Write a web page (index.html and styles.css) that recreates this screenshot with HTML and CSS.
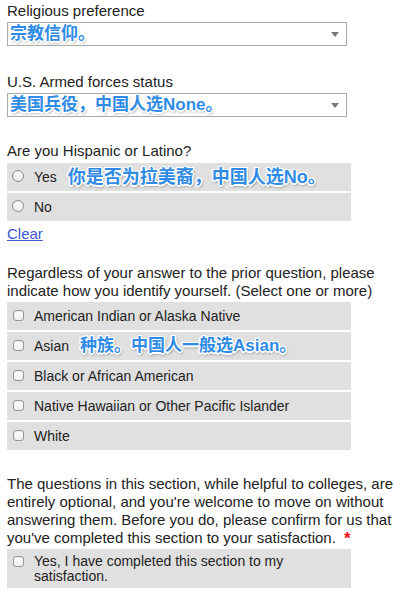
FILE: index.html
```html
<!DOCTYPE html>
<html lang="en">
<head>
<meta charset="utf-8">
<title>Demographics</title>
<link rel="stylesheet" href="styles.css">
</head>
<body>
<div class="form">
  <div class="field field-first">
    <div class="label">Religious preference</div>
    <div class="select">
      <span class="note note-lg">宗教信仰。</span>
      <span class="arrow"></span>
    </div>
  </div>

  <div class="field field-second">
    <div class="label">U.S. Armed forces status</div>
    <div class="select">
      <span class="note note-lg">美国兵役，中国人选None。</span>
      <span class="arrow"></span>
    </div>
  </div>

  <div class="field field-third">
    <div class="label label-rows">Are you Hispanic or Latino?</div>
    <div class="rows">
      <div class="row"><span class="radio"></span><span class="opt">Yes</span><span class="note note-md">你是否为拉美裔，中国人选No。</span></div>
      <div class="row"><span class="radio"></span><span class="opt">No</span></div>
    </div>
    <a class="clear" href="#">Clear</a>
  </div>

  <div class="field field-para">
    <p class="para">Regardless of your answer to the prior question, please indicate how you identify yourself. (Select one or more)</p>
    <div class="rows">
      <div class="row"><span class="check"></span><span class="opt">American Indian or Alaska Native</span></div>
      <div class="row"><span class="check"></span><span class="opt">Asian</span><span class="note note-sm">种族。中国人一般选Asian。</span></div>
      <div class="row"><span class="check"></span><span class="opt">Black or African American</span></div>
      <div class="row"><span class="check"></span><span class="opt">Native Hawaiian or Other Pacific Islander</span></div>
      <div class="row"><span class="check"></span><span class="opt">White</span></div>
    </div>
  </div>

  <div class="field field-para2">
    <p class="para">The questions in this section, while helpful to colleges, are entirely optional, and you're welcome to move on without answering them. Before you do, please confirm for us that you've completed this section to your satisfaction.<span class="req">*</span></p>
    <div class="rows">
      <div class="row row-tall"><span class="check"></span><span class="opt opt-wrap">Yes, I have completed this section to my satisfaction.</span></div>
    </div>
  </div>
</div>
</body>
</html>
```

FILE: styles.css
```css
html, body {
  margin: 0;
  padding: 0;
  background: #ffffff;
}

body {
  font-family: "Liberation Sans", Arial, sans-serif;
  font-size: 15px;
  line-height: 18px;
  color: #222222;
}

.form {
  padding: 2px 0 0 7px;
  width: 398px;
}

.field-first {
  margin-top: 0;
}

.field-second {
  margin-top: 27px;
}

.field-third {
  margin-top: 25px;
}

.label {
  margin-bottom: 2px;
}

.label-rows {
  margin-bottom: 3px;
}

.select {
  width: 340px;
  height: 24px;
  box-sizing: border-box;
  border: 1px solid #aaaaaa;
  background: #ffffff;
  display: flex;
  align-items: center;
  justify-content: space-between;
  padding: 0 5px 0 2px;
}

.arrow {
  width: 0;
  height: 0;
  border-left: 4px solid transparent;
  border-right: 4px solid transparent;
  border-top: 5px solid #777777;
  margin-right: 2px;
}

.note {
  font-family: "Liberation Sans", "Noto Sans CJK SC", sans-serif;
  font-weight: bold;
  color: #2f8be6;
  white-space: nowrap;
  text-shadow:
    -1px -1px 0 #fff, 1px -1px 0 #fff, -1px 1px 0 #fff, 1px 1px 0 #fff,
    0 -1.5px 0 #fff, 0 1.5px 0 #fff, -1.5px 0 0 #fff, 1.5px 0 0 #fff,
    1px 2px 3px rgba(0, 0, 0, 0.5);
}

.note-lg {
  font-size: 17px;
  line-height: 22px;
}

.note-md {
  font-size: 18px;
  line-height: 22px;
  margin-left: 11px;
}

.note-sm {
  font-size: 17px;
  line-height: 22px;
  margin-left: 11px;
}

.rows {
  display: flex;
  flex-direction: column;
  gap: 2px;
  width: 344px;
}

.row {
  height: 28px;
  box-sizing: border-box;
  background: #e0e0e0;
  display: flex;
  align-items: center;
  padding-left: 5px;
  font-size: 14px;
}

.row-tall {
  height: 39px;
  align-items: flex-start;
  padding-top: 5px;
}

.radio {
  width: 12px;
  height: 12px;
  box-sizing: border-box;
  border: 1px solid #8f8f8f;
  border-radius: 50%;
  background: linear-gradient(#ffffff, #ececec);
  box-shadow: inset 0 1px 1px rgba(0, 0, 0, 0.08);
  margin-right: 10px;
  flex: none;
  position: relative;
  top: -1px;
}

.check {
  width: 11px;
  height: 11px;
  box-sizing: border-box;
  border: 1px solid #959595;
  border-radius: 3px;
  background: linear-gradient(#ffffff, #eeeeee);
  box-shadow: inset 0 1px 1px rgba(0, 0, 0, 0.08);
  margin-left: 1px;
  margin-right: 10px;
  flex: none;
  position: relative;
  top: -1px;
}

.row-tall .check {
  margin-top: 2px;
  top: 0;
}

.opt {
  white-space: nowrap;
}

.opt-wrap {
  white-space: normal;
  width: 255px;
  line-height: 15px;
}

.clear {
  display: inline-block;
  margin-top: 4px;
  color: #3b55d3;
  text-decoration: underline;
}

.field-para {
  margin-top: 21px;
}

.field-para2 {
  margin-top: 25px;
}

.para {
  margin: 0 0 2px 0;
  width: 398px;
}

.req {
  display: inline-block;
  color: #e41010;
  font-size: 17px;
  line-height: 10px;
  font-weight: bold;
  margin-left: 8px;
  position: relative;
  top: 1px;
}
```
